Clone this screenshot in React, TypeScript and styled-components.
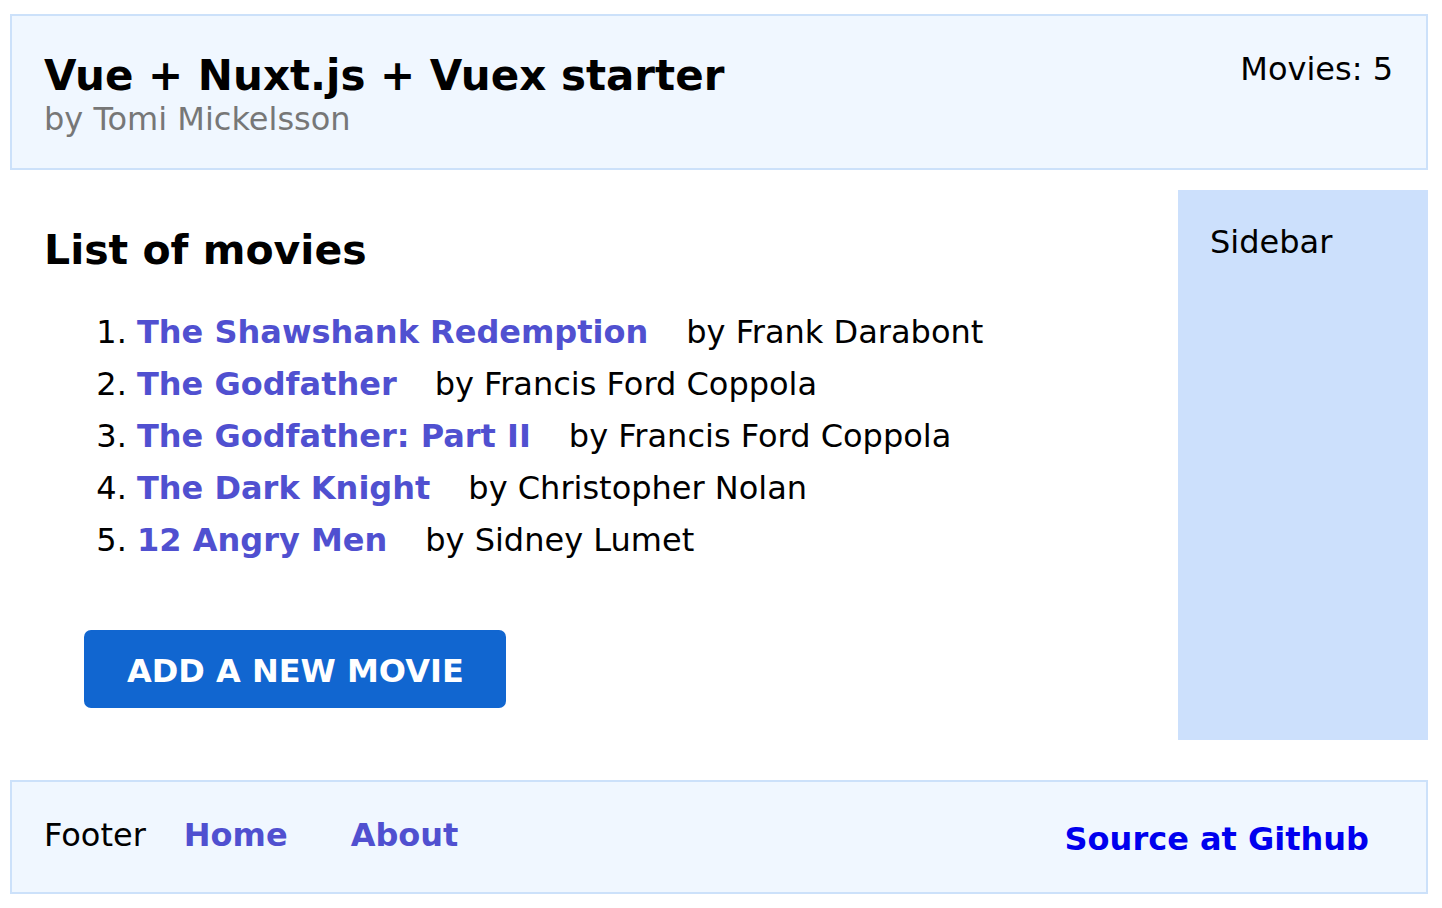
import React from "react";
import styled, { createGlobalStyle } from "styled-components";

const GlobalStyle = createGlobalStyle`
  html, body {
    margin: 0;
    padding: 0;
    background: #ffffff;
  }
  body {
    font-family: "DejaVu Sans", Verdana, sans-serif;
    color: #000000;
  }
`;

const Page = styled.div`
  display: flex;
  flex-direction: column;
  padding: 14px 14px 0 10px;
`;

const Header = styled.header`
  display: flex;
  justify-content: space-between;
  align-items: flex-start;
  background: #f0f7ff;
  border: 2px solid #cce1fa;
  padding: 34px 32px 30px 32px;
`;

const TitleBlock = styled.div`
  display: flex;
  flex-direction: column;
  margin-top: 2px;
`;

const Title = styled.h1`
  margin: 0;
  font-size: 42px;
  line-height: 48px;
  font-weight: bold;
`;

const Subtitle = styled.div`
  font-size: 32px;
  line-height: 38px;
  color: #777777;
`;

const Count = styled.div`
  font-size: 32px;
  line-height: 38px;
  margin-right: 1px;
`;

const Main = styled.div`
  display: flex;
  margin-top: 20px;
`;

const Content = styled.main`
  flex: 1;
  display: flex;
  flex-direction: column;
  align-items: flex-start;
  padding: 36px 34px 32px 34px;
`;

const Heading = styled.h2`
  margin: 0;
  font-size: 41px;
  line-height: 48px;
  font-weight: bold;
`;

const MovieList = styled.ol`
  margin: 32px 0 0 0;
  padding-left: 93px;
  font-size: 32px;
  line-height: 52px;
`;

const MovieItem = styled.li``;

const MovieLink = styled.a`
  color: #5050d0;
  font-weight: bold;
  text-decoration: none;
`;

const Director = styled.span`
  margin-left: 38px;
`;

const AddButton = styled.button`
  margin: 64px 0 0 40px;
  background: #1166d0;
  color: #ffffff;
  border: none;
  border-radius: 7px;
  padding: 22px 42px 18px 43px;
  font-family: "DejaVu Sans", Verdana, sans-serif;
  font-size: 32px;
  line-height: 38px;
  font-weight: bold;
  text-transform: uppercase;
  cursor: pointer;
`;

const Sidebar = styled.aside`
  width: 250px;
  box-sizing: border-box;
  background: #cce0fc;
  padding: 33px 32px;
  font-size: 32px;
  line-height: 38px;
`;

const Footer = styled.footer`
  display: flex;
  justify-content: space-between;
  align-items: flex-start;
  margin-top: 40px;
  background: #f0f7ff;
  border: 2px solid #cce1fa;
  padding: 34px 57px 34px 32px;
  font-size: 32px;
  line-height: 38px;
`;

const FooterLeft = styled.div`
  display: flex;
  align-items: baseline;
`;

const FooterLabel = styled.span`
  margin-right: 38px;
`;

const NavLink = styled.a`
  color: #5050d0;
  font-weight: bold;
  text-decoration: none;
  & + & {
    margin-left: 63px;
  }
`;

const SourceLink = styled.a`
  margin-top: 4px;
  color: #0000ee;
  font-weight: bold;
  text-decoration: none;
`;

const movies = [
  { title: "The Shawshank Redemption", director: "Frank Darabont" },
  { title: "The Godfather", director: "Francis Ford Coppola" },
  { title: "The Godfather: Part II", director: "Francis Ford Coppola" },
  { title: "The Dark Knight", director: "Christopher Nolan" },
  { title: "12 Angry Men", director: "Sidney Lumet" },
];

export default function App() {
  return (
    <>
      <GlobalStyle />
      <Page>
        <Header>
          <TitleBlock>
            <Title>Vue + Nuxt.js + Vuex starter</Title>
            <Subtitle>by Tomi Mickelsson</Subtitle>
          </TitleBlock>
          <Count>Movies: {movies.length}</Count>
        </Header>
        <Main>
          <Content>
            <Heading>List of movies</Heading>
            <MovieList>
              {movies.map((m) => (
                <MovieItem key={m.title}>
                  <MovieLink href="#">{m.title}</MovieLink>
                  <Director>by {m.director}</Director>
                </MovieItem>
              ))}
            </MovieList>
            <AddButton>Add a new movie</AddButton>
          </Content>
          <Sidebar>Sidebar</Sidebar>
        </Main>
        <Footer>
          <FooterLeft>
            <FooterLabel>Footer</FooterLabel>
            <NavLink href="#">Home</NavLink>
            <NavLink href="#">About</NavLink>
          </FooterLeft>
          <SourceLink href="#">Source at Github</SourceLink>
        </Footer>
      </Page>
    </>
  );
}
